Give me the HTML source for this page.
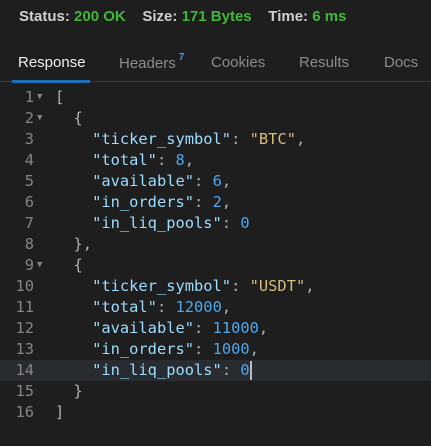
<!DOCTYPE html>
<html><head><style>
html,body{margin:0;padding:0;background:#1e1e1e;width:431px;height:446px;overflow:hidden}
.top{position:absolute;top:8px;left:19px;font:bold 15px "Liberation Sans",sans-serif;color:#cfcfcf;white-space:nowrap}
.top span.g{color:#3fb83a}
.tabs{position:absolute;top:54px;left:0;width:431px;font:15px "Liberation Sans",sans-serif;color:#8c8c8c}
.tabs div{position:absolute;top:0;white-space:nowrap}
.line{position:absolute;top:81px;left:0;width:431px;height:1px;background:#3c3c3c}
.ul{position:absolute;top:80px;left:12px;width:78px;height:3px;background:#1f6fb5}
.code{position:absolute;top:87px;left:0;width:431px;font:15.4px "DejaVu Sans Mono",monospace}
.r{position:relative;height:21px;line-height:21px;white-space:pre;color:#b0b0b0}
.n{position:absolute;left:0;width:34px;text-align:right;color:#858585}
.a{position:absolute;left:37px;color:#858585;font-size:9px}
.c{position:absolute;left:55px}
.k{color:#9cdcfe}.v{color:#4fa6ea}.s{color:#d7ba7d}
.hl{background:#282c30}
.cur{display:inline-block;width:2px;height:19px;background:#bbb;vertical-align:middle}
</style></head><body>
<div class="top">Status: <span class="g">200 OK</span>&nbsp;&nbsp;&nbsp;&nbsp;Size: <span class="g">171 Bytes</span>&nbsp;&nbsp;&nbsp;&nbsp;Time: <span class="g">6 ms</span></div>
<div class="tabs">
<div style="left:18px;color:#eee">Response</div>
<div style="left:119px">Headers<sup style="color:#3a9ee8;font-size:10px;font-weight:bold;position:relative;top:-2px;margin-left:3px">7</sup></div>
<div style="left:211px">Cookies</div>
<div style="left:299px">Results</div>
<div style="left:384px">Docs</div>
</div>
<div class="line"></div><div class="ul"></div>
<div class="code">
<div class="r"><span class="n">1</span><span class="a">▼</span><span class="c">[</span></div>
<div class="r"><span class="n">2</span><span class="a">▼</span><span class="c">  {</span></div>
<div class="r"><span class="n">3</span><span class="c">    <span class="k">"ticker_symbol"</span>: <span class="s">"BTC"</span>,</span></div>
<div class="r"><span class="n">4</span><span class="c">    <span class="k">"total"</span>: <span class="v">8</span>,</span></div>
<div class="r"><span class="n">5</span><span class="c">    <span class="k">"available"</span>: <span class="v">6</span>,</span></div>
<div class="r"><span class="n">6</span><span class="c">    <span class="k">"in_orders"</span>: <span class="v">2</span>,</span></div>
<div class="r"><span class="n">7</span><span class="c">    <span class="k">"in_liq_pools"</span>: <span class="v">0</span></span></div>
<div class="r"><span class="n">8</span><span class="c">  },</span></div>
<div class="r"><span class="n">9</span><span class="a">▼</span><span class="c">  {</span></div>
<div class="r"><span class="n">10</span><span class="c">    <span class="k">"ticker_symbol"</span>: <span class="s">"USDT"</span>,</span></div>
<div class="r"><span class="n">11</span><span class="c">    <span class="k">"total"</span>: <span class="v">12000</span>,</span></div>
<div class="r"><span class="n">12</span><span class="c">    <span class="k">"available"</span>: <span class="v">11000</span>,</span></div>
<div class="r"><span class="n">13</span><span class="c">    <span class="k">"in_orders"</span>: <span class="v">1000</span>,</span></div>
<div class="r hl"><span class="n">14</span><span class="c">    <span class="k">"in_liq_pools"</span>: <span class="v">0</span><span class="cur"></span></span></div>
<div class="r"><span class="n">15</span><span class="c">  }</span></div>
<div class="r"><span class="n">16</span><span class="c">]</span></div>
</div>
</body></html>
